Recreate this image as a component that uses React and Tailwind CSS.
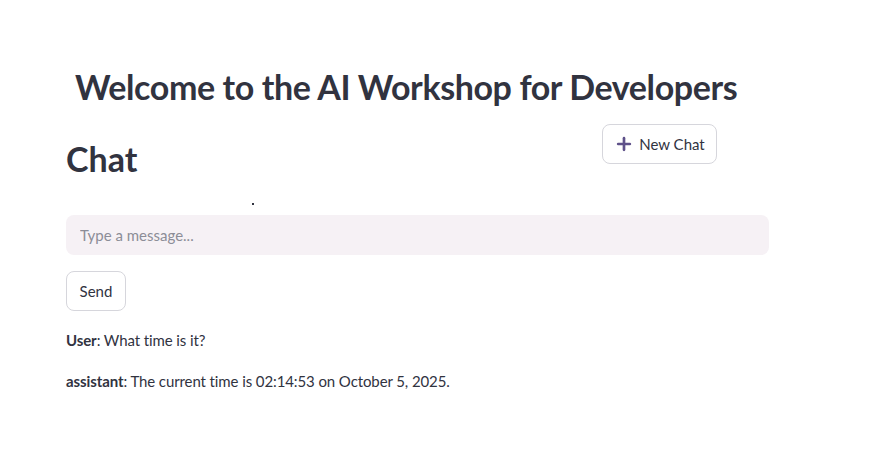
import { Plus } from 'lucide-react';

export default function App() {
  return (
    <div
      className="w-[881px] h-[473px] bg-white text-[#31333f] overflow-hidden"
      style={{ fontFamily: 'Lato, "Noto Sans", sans-serif' }}
    >
      <div className="w-[703px] ml-[66px] pt-[64px] flex flex-col">
        {/* Title */}
        <h1 className="pl-[9px] text-[34px] leading-[46px] font-bold tracking-[-0.4px] whitespace-nowrap">
          Welcome to the AI Workshop for Developers
        </h1>

        {/* Header row */}
        <div className="flex mt-[14px]">
          <div className="w-[536px] pt-[14px]">
            <h2 className="text-[34px] leading-[42px] font-bold">Chat</h2>
          </div>
          <button className="h-[40px] w-[115px] flex items-center justify-center gap-[5px] border border-[#d6d6dc] rounded-[8px] text-[15px] bg-white">
            <Plus size={20} strokeWidth={3.2} className="text-[#5e5189]" />
            <span>New Chat</span>
          </button>
        </div>

        {/* Dot */}
        <div className="h-[35px] relative">
          <span className="absolute left-[186px] top-[23px] w-[2px] h-[2px] bg-[#31333f]" />
        </div>

        {/* Input */}
        <div className="h-[40px] rounded-[8px] bg-[#f6f1f5] flex items-center px-[14px]">
          <input
            className="w-full bg-transparent outline-none text-[15px] placeholder-[#8c8d97]"
            placeholder="Type a message..."
          />
        </div>

        {/* Send */}
        <div className="mt-[16px]">
          <button className="h-[40px] w-[60px] border border-[#d6d6dc] rounded-[8px] text-[15px] bg-white">
            Send
          </button>
        </div>

        {/* Messages */}
        <div className="mt-[19px] flex flex-col gap-[20px] text-[15px] leading-[21px] tracking-[-0.1px]">
          <p>
            <span className="font-bold">User</span>: What time is it?
          </p>
          <p>
            <span className="font-bold">assistant</span>: The current time is 02:14:53 on October 5, 2025.
          </p>
        </div>
      </div>
    </div>
  );
}
